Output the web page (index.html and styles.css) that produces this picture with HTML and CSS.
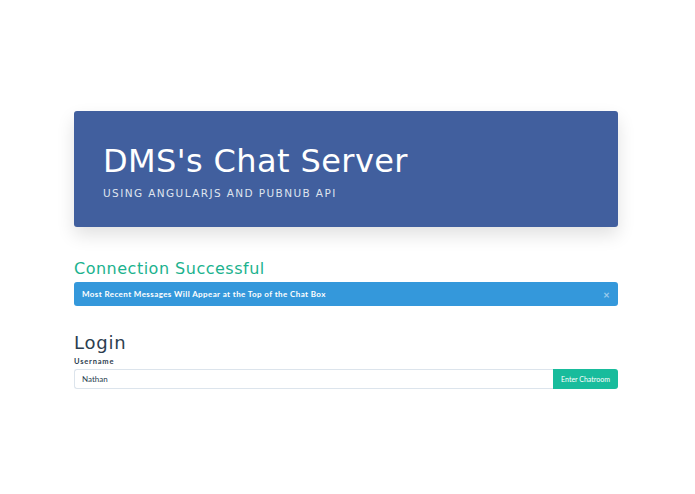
FILE: index.html
```html
<!DOCTYPE html>
<html>
<head>
<meta charset="utf-8">
<link rel="stylesheet" href="styles.css">
</head>
<body>
<div class="container">
  <div class="jumbotron">
    <h1 class="title">DMS's Chat Server</h1>
    <p class="subtitle">USING ANGULARJS AND PUBNUB API</p>
  </div>
  <h3 class="status">Connection Successful</h3>
  <div class="alert">
    <span>Most Recent Messages Will Appear at the Top of the Chat Box</span>
    <span class="close">×</span>
  </div>
  <h3 class="login">Login</h3>
  <label class="label">Username</label>
  <div class="input-group">
    <input class="input" type="text" value="Nathan">
    <button class="btn">Enter Chatroom</button>
  </div>
</div>
</body>
</html>
```
FILE: styles.css
```css
html, body { margin: 0; padding: 0; background: #fff; }
body { font-family: Lato, "Open Sans", sans-serif; color: #2c3e50; }
.container { width: 544px; margin-left: 74px; padding-top: 111px; }
.jumbotron {
  background: #415f9e;
  border-radius: 3px;
  height: 116px;
  box-sizing: border-box;
  padding: 30px 29px 0;
  box-shadow: 0 8px 18px rgba(0,0,0,0.12);
}
.title {
  margin: 0;
  font-family: "DejaVu Sans", sans-serif;
  font-weight: normal;
  font-size: 32px;
  line-height: 40px;
  color: #fff;
  letter-spacing: 0.4px;
}
.subtitle {
  margin: 6px 0 0;
  font-family: "DejaVu Sans", sans-serif;
  font-size: 10.5px;
  letter-spacing: 1.4px;
  color: #dfe4ee;
}
.status {
  margin: 32px 0 0;
  font-family: "DejaVu Sans", sans-serif;
  font-weight: normal;
  font-size: 16px;
  line-height: 20px;
  letter-spacing: 0.5px;
  color: #1bb28e;
}
.alert {
  margin-top: 3px;
  background: #3498db;
  border-radius: 3px;
  height: 24px;
  display: flex;
  align-items: center;
  justify-content: space-between;
  padding: 0 8px;
  color: #fff;
  font-size: 8px;
  font-weight: bold;
  letter-spacing: 0.4px;
}
.close { font-size: 11px; opacity: 0.5; font-weight: bold; }
.login {
  margin: 27px 0 0;
  font-family: "DejaVu Sans", sans-serif;
  font-weight: normal;
  font-size: 18px;
  line-height: 20px;
  letter-spacing: 0.8px;
  color: #2c3e50;
}
.label {
  display: block;
  margin-top: 3px;
  font-size: 7.5px;
  font-weight: bold;
  letter-spacing: 0.8px;
  color: #2c3e50;
  line-height: 12px;
}
.input-group { display: flex; margin-top: 1px; height: 20px; }
.input {
  flex: 1;
  box-sizing: border-box;
  height: 20px;
  border: 1px solid #dce4ec;
  border-right: none;
  border-radius: 3px 0 0 3px;
  padding: 0 7px;
  font-family: Lato, sans-serif;
  font-size: 8px;
  color: #2c3e50;
  outline: none;
}
.btn {
  width: 65px;
  height: 20px;
  border: none;
  background: #18bc9c;
  color: #fff;
  font-family: Lato, sans-serif;
  font-size: 7px;
  border-radius: 0 3px 3px 0;
  padding: 0;
}
```
